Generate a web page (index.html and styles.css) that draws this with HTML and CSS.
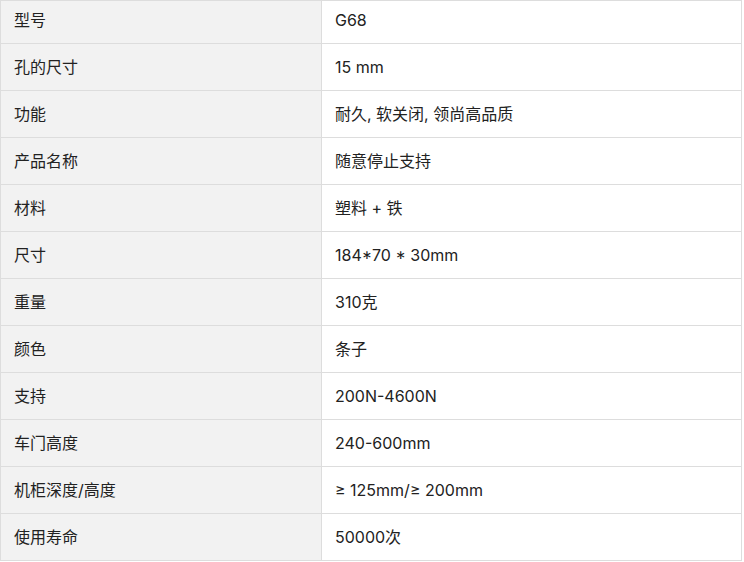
FILE: index.html
```html
<!DOCTYPE html>
<html lang="zh">
<head>
<meta charset="utf-8">
<link rel="stylesheet" href="styles.css">
</head>
<body>
<table class="spec">
  <tbody>
    <tr class="first"><th>型号</th><td>G68</td></tr>
    <tr><th>孔的尺寸</th><td>15 mm</td></tr>
    <tr><th>功能</th><td>耐久, 软关闭, 领尚高品质</td></tr>
    <tr><th>产品名称</th><td>随意停止支持</td></tr>
    <tr><th>材料</th><td>塑料 + 铁</td></tr>
    <tr><th>尺寸</th><td>184*70 * 30mm</td></tr>
    <tr><th>重量</th><td>310克</td></tr>
    <tr><th>颜色</th><td>条子</td></tr>
    <tr><th>支持</th><td>200N-4600N</td></tr>
    <tr><th>车门高度</th><td>240-600mm</td></tr>
    <tr><th>机柜深度/高度</th><td>≥ 125mm/≥ 200mm</td></tr>
    <tr><th>使用寿命</th><td>50000次</td></tr>
  </tbody>
</table>
</body>
</html>
```
FILE: styles.css
```css
html, body {
  margin: 0;
  padding: 0;
  background: #ffffff;
}
body {
  font-family: Inter, "Noto Sans CJK SC", sans-serif;
  font-size: 16px;
  color: #222222;
}
.spec {
  border-collapse: collapse;
  width: 742px;
  table-layout: fixed;
}
.spec th,
.spec td {
  border: 1px solid #dddddd;
  padding: 12px 12px 12px 13px;
  height: 22px;
  line-height: 22px;
  text-align: left;
  font-weight: normal;
  vertical-align: middle;
}
.spec th {
  width: 295px;
  background: #f2f2f2;
}
.spec td {
  background: #ffffff;
}
.spec .first th,
.spec .first td {
  padding-top: 8px;
  height: 22px;
}
```
